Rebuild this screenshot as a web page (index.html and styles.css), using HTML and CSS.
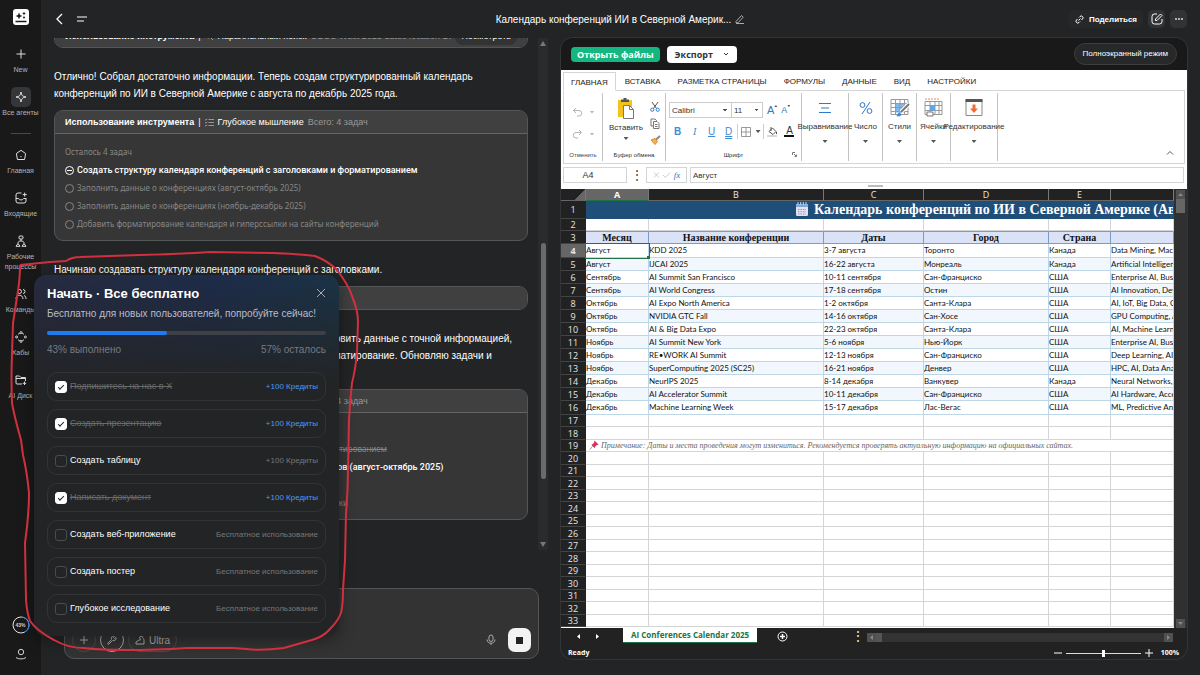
FILE: index.html
```html
<!DOCTYPE html>
<html lang="ru">
<head>
    <meta charset="UTF-8">
    <title>Календарь конференций ИИ</title>
    <link rel="stylesheet" href="styles.css">
</head>
<body>
<div class="app">
    <nav class="side">
        <a class="logo" href="#" aria-label="Home">
            <svg width="16" height="16" viewBox="0 0 16 16"><rect width="16" height="16" rx="3" fill="#fff"/><path d="M6 3.5l1 2.4 2.4 1-2.4 1-1 2.4-1-2.4-2.4-1 2.4-1z" fill="#191919"/><path d="M11 2.5l.6 1.4 1.4.6-1.4.6-.6 1.4-.6-1.4L9 4.5l1.4-.6z" fill="#191919"/><circle cx="11" cy="8.5" r="1" fill="#191919"/><path d="M2.5 12.5h11" stroke="#191919" stroke-width="1.5"/></svg>
        </a>
        <a class="item" href="#">
            <span class="ico"><svg width="12" height="12" viewBox="0 0 12 12"><path d="M6 1.5v9M1.5 6h9"/></svg></span>
            <span>New</span>
        </a>
        <a class="item on" href="#">
            <span class="ico"><svg width="12" height="12" viewBox="0 0 12 12"><path d="M6 1c.4 3.4 1.6 4.6 5 5-3.4.4-4.6 1.6-5 5-.4-3.4-1.6-4.6-5-5 3.4-.4 4.6-1.6 5-5z"/></svg></span>
            <span>Все агенты</span>
        </a>
        <i class="line"></i>
        <a class="item" href="#">
            <span class="ico"><svg width="12" height="12" viewBox="0 0 12 12"><path d="M6 1.3l4.6 3.2-1 6H2.4l-1-6z"/><path d="M6 7v1.2"/></svg></span>
            <span>Главная</span>
        </a>
        <a class="item" href="#">
            <span class="ico"><svg width="12" height="12" viewBox="0 0 12 12"><path d="M6.5 1H3a2 2 0 0 0-2 2v6a2 2 0 0 0 2 2h6a2 2 0 0 0 2-2V6M1 6.5h2.5c.6 2 4.4 2 5 0H11M9.7.6v4M7.7 2.6h4"/></svg></span>
            <span>Входящие</span>
        </a>
        <a class="item" href="#">
            <span class="ico"><svg width="12" height="12" viewBox="0 0 12 12"><rect x="4" y="1" width="4" height="3" rx="1"/><path d="M6 4v2M3 8.5C3 6.5 4 6 6 6s3 .5 3 2.5M3 8.5l-2 2.8h4zM9 8.5l-2 2.8h4z"/></svg></span>
            <span>Рабочие процессы</span>
        </a>
        <a class="item" href="#">
            <span class="ico"><svg width="12" height="12" viewBox="0 0 12 12"><circle cx="4.5" cy="3.5" r="2"/><path d="M1 11c0-5 7-5 7 0M8 1.5a2 2 0 0 1 0 4M9 7.5c1.5.5 2 1.8 2 3.5"/></svg></span>
            <span>Команды</span>
        </a>
        <a class="item" href="#">
            <span class="ico"><svg width="12" height="12" viewBox="0 0 12 12"><path d="M3 3.5A4 4 0 0 1 4.8 2.2M7.2 2.2A4 4 0 0 1 9 3.5M9 8.5a4 4 0 0 1-1.8 1.3M4.8 9.8A4 4 0 0 1 3 8.5"/><circle cx="6" cy="1.6" r="1"/><circle cx="6" cy="10.4" r="1"/><circle cx="1.6" cy="6" r="1"/><circle cx="10.4" cy="6" r="1"/></svg></span>
            <span>Хабы</span>
        </a>
        <a class="item" href="#">
            <span class="ico"><svg width="12" height="12" viewBox="0 0 12 12"><path d="M7 10H2a1 1 0 0 1-1-1V2h3.5L6 3.5h4.5V7M1 4.5h9.5M9.5 7.5v3.5M7.7 9.3h3.5"/></svg></span>
            <span>AI Диск</span>
        </a>
        <div class="bottom">
            <a class="ring" href="#">
                <svg width="18" height="18" viewBox="0 0 18 18" aria-hidden="true"><circle cx="9" cy="9" r="8" stroke="#e6e6e6"/><path d="M9 1a8 8 0 0 1 3.4 15.2" stroke="#1f7cf0"/></svg>
                <b>43%</b>
            </a>
            <a href="#" aria-label="Профиль"><svg width="12" height="12" viewBox="0 0 12 12"><circle cx="6" cy="4" r="2.7"/><path d="M1 9.6c3 1.8 7 1.8 10 0"/></svg></a>
        </div>
    </nav>

    <div class="main">
        <header class="top">
            <div class="top-left">
                <button aria-label="Назад"><svg width="10" height="12" viewBox="0 0 10 12"><path d="M8 1L3 6l5 5" stroke-width="1.3"/></svg></button>
                <button aria-label="Меню"><svg width="12" height="8" viewBox="0 0 12 8"><path d="M1 2h10M1 6h7"/></svg></button>
            </div>
            <h1>Календарь конференций ИИ в Северной Америк...
                <button aria-label="Переименовать"><svg width="10" height="10" viewBox="0 0 10 10"><path d="M1 7.5L6.5 1.5l1.7 1.7L3 8.8H1zM1 9.5h8"/></svg></button>
            </h1>
            <div class="top-right">
                <button class="share"><svg width="9" height="9" viewBox="0 0 9 9"><path d="M3.5 5.5l2-2M4 2.5l1-1a1.7 1.7 0 0 1 2.5 2.5l-1 1M5 6.5l-1 1A1.7 1.7 0 0 1 1.5 5l1-1"/></svg>Поделиться</button>
                <button class="sq" aria-label="Редактировать"><svg width="12" height="12" viewBox="0 0 12 12"><path d="M6 1H3.5A2.5 2.5 0 0 0 1 3.5v5A2.5 2.5 0 0 0 3.5 11h5A2.5 2.5 0 0 0 11 8.5V6M4.5 7.5V6L9.5 1 11 2.5l-5 5z"/></svg></button>
                <button class="sq" aria-label="Ещё"><svg width="10" height="4" viewBox="0 0 10 4"><circle cx="2" cy="2" r="1" fill="#ddd"/><circle cx="5" cy="2" r="1" fill="#ddd"/><circle cx="8" cy="2" r="1" fill="#ddd"/></svg></button>
            </div>
        </header>

        <div class="cols">
            <section class="chat">
                <div class="log-wrap">
                    <div class="log">
                        <div class="card first">
                            <div class="card-head"><b>Использование инструмента</b><i>|</i><svg width="9" height="9" viewBox="0 0 9 9"><circle cx="3.5" cy="3.5" r="2.5"/><path d="M5.5 5.5L8 8"/></svg><span>Параллельный поиск</span><em>ODSC West 2025 dates location Burlingame</em><button>Посмотреть</button></div>
                        </div>
                        <p>Отлично! Собрал достаточно информации. Теперь создам структурированный календарь конференций по ИИ в Северной Америке с августа по декабрь 2025 года.</p>
                        <div class="card">
                            <div class="card-head"><b>Использование инструмента</b><i>|</i><svg width="9" height="9" viewBox="0 0 9 9"><path d="M3.5 1.5H9M3.5 4.5H9M3.5 7.5H9M0 1.5l1 .7L2.3.8M0 4.5l1 .7 1.3-1.4M0 7.5l1 .7 1.3-1.4"/></svg><span>Глубокое мышление</span><em>Всего: 4 задач</em></div>
                            <div class="tasks">
                                <small>Осталось 4 задач</small>
                                <ul>
                                    <li class="now">Создать структуру календаря конференций с заголовками и форматированием</li>
                                    <li>Заполнить данные о конференциях (август-октябрь 2025)</li>
                                    <li>Заполнить данные о конференциях (ноябрь-декабрь 2025)</li>
                                    <li>Добавить форматирование календаря и гиперссылки на сайты конференций</li>
                                </ul>
                            </div>
                        </div>
                        <p>Начинаю создавать структуру календаря конференций с заголовками.</p>
                        <div class="card"><div class="card-head"><b>Использование инструмента</b></div></div>
                        <p>Отлично! Структура календаря создана. Теперь должен обновить данные с точной информацией, <br>которую я нашёл при поиске дат, и применить ко всему форматирование. Обновляю задачи и <br>продолжаю.</p>
                        <div class="card">
                            <div class="card-head"><b>Использование инструмента</b><i>|</i><svg width="9" height="9" viewBox="0 0 9 9"><path d="M3.5 1.5H9M3.5 4.5H9M3.5 7.5H9"/></svg><span>Глубокое мышление</span><em>Всего: 4 задач</em></div>
                            <div class="tasks">
                                <small>Осталось 3 задач</small>
                                <ul>
                                    <li class="old">Создать структуру календаря конференций с заголовками и форматированием</li>
                                    <li class="now">Заполнить точные данные о конференциях из всех источников (август-октябрь 2025)</li>
                                    <li>Заполнить данные (ноябрь-декабрь 2025)</li>
                                    <li>Добавить форматирование, гиперссылки на сайты и указать рубрики</li>
                                </ul>
                            </div>
                        </div>
                    </div>
                    <div class="vbar" aria-hidden="true"><span></span></div>
                </div>
                <form class="composer">
                    <button type="button" class="round" aria-label="Добавить"><svg width="10" height="10" viewBox="0 0 10 10"><path d="M5 1v8M1 5h8"/></svg></button>
                    <button type="button" class="round lit" aria-label="Инструменты"><svg width="10" height="10" viewBox="0 0 10 10"><path d="M1 8l3.5-3.5A2.5 2.5 0 0 1 7.5 1L6.3 2.5l1.2 1.2L9 2.5a2.5 2.5 0 0 1-3.5 3L2 9a.7.7 0 0 1-1-1z"/></svg></button>
                    <button type="button" class="round ultra"><svg width="10" height="10" viewBox="0 0 10 10"><path d="M1 9h8V5.5C9 3 7.5 3.5 7 1L4.5 2l1 3H4L1 7z"/></svg>Ultra</button>
                    <span class="grow"></span>
                    <button type="button" class="mic" aria-label="Голос"><svg width="10" height="12" viewBox="0 0 10 12"><rect x="3" y="1" width="4" height="6.5" rx="2"/><path d="M1 5.5c0 5 8 5 8 0M5 9.3V11"/></svg></button>
                    <button type="button" class="stop" aria-label="Стоп"></button>
                </form>
            </section>

            <section class="sheet">
                <div class="sheet-top">
                    <button class="open">Открыть файлы</button>
                    <button class="export">Экспорт<svg width="6" height="6" viewBox="0 0 6 6"><path d="M1 2l2 2 2-2"/></svg></button>
                    <button class="full">Полноэкранный режим</button>
                </div>
                <div class="ribbon">
                    <div class="tabs">
                        <a class="on" href="#">ГЛАВНАЯ</a><a href="#">ВСТАВКА</a><a href="#">РАЗМЕТКА СТРАНИЦЫ</a><a href="#">ФОРМУЛЫ</a><a href="#">ДАННЫЕ</a><a href="#">ВИД</a><a href="#">НАСТРОЙКИ</a>
                    </div>
                    <div class="groups">
                        <div class="group undo">
                            <div class="pair"><svg width="11" height="11" viewBox="0 0 11 11"><path d="M4 1L1.5 3.5 4 6M1.5 3.5H7a2.7 2.7 0 0 1 0 5.5H5"/></svg><i class="tri"></i></div>
                            <div class="pair"><svg width="11" height="11" viewBox="0 0 11 11"><path d="M7 1l2.5 2.5L7 6M9.5 3.5H4a2.7 2.7 0 0 0 0 5.5h2"/></svg><i class="tri"></i></div>
                            <small>Отменить</small>
                        </div>
                        <div class="group clip">
                            <button class="paste">
                                <svg width="18" height="21" viewBox="0 0 18 21"><path d="M1 2h14v17H1z" fill="#f5c21b"/><path d="M4 1.5h8V4H4zM6.5 0h3v2h-3z" fill="#555"/><path d="M6.5 7.5h6l4 4v9h-10z" fill="#fff" stroke="#777"/><path d="M12.5 7.5v4h4" fill="none" stroke="#777"/></svg>
                                Вставить
                                <i class="tri"></i>
                            </button>
                            <div class="stack">
                                <svg width="10" height="10" viewBox="0 0 10 10"><path d="M2 0l4.5 6.5M8 0L3.5 6.5" stroke="#555"/><circle cx="2.3" cy="7.7" r="1.6" stroke="#2f78c4"/><circle cx="7.7" cy="7.7" r="1.6" stroke="#2f78c4"/></svg>
                                <svg width="10" height="11" viewBox="0 0 10 11"><path d="M1 1h4l1.5 1.5V8H1z" stroke="#777"/><path d="M3.5 3.5h3.5L9 5.5v5H3.5zM5 6.5h2.5M5 8.5h2.5" stroke="#777" fill="#fff"/></svg>
                                <svg width="11" height="10" viewBox="0 0 11 10"><path d="M1 5l4-1.5 2.5 3L5 9.5z" fill="#f3b24a" stroke="#d98a2b"/><path d="M6 4.5L10 1" stroke="#888" stroke-width="2"/></svg>
                            </div>
                            <small>Буфер обмена</small>
                        </div>
                        <div class="group font">
                            <div class="selects">
                                <select class="face" aria-label="Шрифт"><option>Calibri</option></select>
                                <select class="size" aria-label="Размер"><option>11</option></select>
                                <b class="aa">A<i class="tri up"></i></b><b class="aa sm">A<i class="tri"></i></b>
                            </div>
                            <div class="marks">
                                <button><b>B</b></button><button><i class="it">I</i></button><button><u>U</u></button><button><u class="dbl">D</u></button>
                                <button class="cut"><svg width="10" height="10" viewBox="0 0 10 10"><path d="M.5.5h9v9h-9zM5 .5v9M.5 5h9" stroke="#999"/></svg><i class="tri"></i></button>
                                <button class="cut"><svg width="11" height="10" viewBox="0 0 11 10"><path d="M2 4.5L5.5 1 9 4.5 6 7.5zM4 0v4M9.5 5v2" stroke="#555"/><path d="M0 9h10" stroke="#d8d8d8" stroke-width="2"/></svg></button>
                                <button><span class="ink">A</span></button>
                            </div>
                            <small>Шрифт</small>
                            <svg class="launch" width="5" height="5" viewBox="0 0 5 5"><path d="M.5 3V.5H3M2 2l2 2M4.5 2.5v2h-2" stroke="#777"/></svg>
                        </div>
                        <button class="group big wide">
                            <svg width="20" height="20" viewBox="0 0 20 20"><path d="M4 5.5h12M6 10h8M4 14.5h12" stroke="#2f78c4" stroke-width="1.2"/></svg>
                            <span>Выравнивание</span><i class="tri"></i>
                        </button>
                        <button class="group big">
                            <svg width="20" height="20" viewBox="0 0 20 20"><circle cx="6.5" cy="7" r="2.4" stroke="#2f78c4"/><circle cx="13.5" cy="13" r="2.4" stroke="#2f78c4"/><path d="M14 4L6 16" stroke="#2f78c4"/></svg>
                            <span>Число</span><i class="tri"></i>
                        </button>
                        <button class="group big">
                            <svg width="20" height="20" viewBox="0 0 20 20"><path d="M5.5 5.5h9v9h-9z" fill="#7db8ee"/><path d="M1 1.5h17v15H1zM1 5.5h17M1 9.5h17M1 13.5h17M5.5 1.5v15M10 1.5v15M14.5 1.5v15" stroke="#999"/><path d="M19 6l-8 8" stroke="#fff" stroke-width="4"/><path d="M19 6l-8 8" stroke="#777" stroke-width="2"/><path d="M6 18c2 0 1-3 3.5-3.5l2 2C11 18.5 8 19 6 18z" fill="#2f8be6"/></svg>
                            <span>Стили</span><i class="tri"></i>
                        </button>
                        <button class="group big">
                            <svg width="20" height="20" viewBox="0 0 20 20"><path d="M1 1h15" stroke="#e0916a" stroke-dasharray="2 1"/><path d="M1 3.5h17v13H1zM1 7.5h17M1 12.5h17M6 3.5v13M11 3.5v13M15 3.5v13" stroke="#999"/><path d="M6 7.5h5v5H6z" fill="#5ba7ee"/><path d="M3 14h6v4H3z" fill="#fff" stroke="#777"/></svg>
                            <span>Ячейки</span><i class="tri"></i>
                        </button>
                        <button class="group big wide">
                            <svg width="20" height="20" viewBox="0 0 20 20"><path d="M2 2h16v15.5H2z" fill="#fff" stroke="#888"/><path d="M1.5 1h17v3h-17z" fill="#555"/><path d="M8.5 6.5h3v4H14l-4 4.5-4-4.5h2.5z" fill="#ee6c37"/></svg>
                            <span>Редактирование</span><i class="tri"></i>
                        </button>
                        <svg class="fold" width="8" height="6" viewBox="0 0 8 6"><path d="M1 4.5L4 1.5l3 3" stroke="#555"/></svg>
                    </div>
                </div>
                <div class="formula">
                    <input class="name" value="A4" aria-label="Ячейка">
                    <span class="dots">&#8942;</span>
                    <div class="fx"><svg width="18" height="8" viewBox="0 0 18 8"><path d="M1 1.5l5 5M6 1.5l-5 5M10 4l2.5 2.5L17 1.5" stroke="#ccc"/></svg><i>fx</i></div>
                    <input class="value" value="Август" aria-label="Формула">
                    <span class="grip"></span>
                </div>
                <div class="grid">
                    <div class="cells">
                        <table>
                            <colgroup><col class="c-n"><col class="c-a"><col class="c-b"><col class="c-c"><col class="c-d"><col class="c-e"><col></colgroup>
                            <thead><tr><th class="corner"></th><th class="sel">A</th><th>B</th><th>C</th><th>D</th><th>E</th><th></th></tr></thead>
                            <tbody id="rows">
                            <tr class="title"><th>1</th><td colspan="6"><svg width="14" height="14" viewBox="0 0 14 14"><rect x="1" y="2" width="12" height="12" rx="1.5" fill="#e4e2f2"/><path d="M1 2h12v3H1z" fill="#7fa6d8"/><path d="M3 0v3M5.7 0v3M8.3 0v3M11 0v3" stroke="#c9d9ee"/><path d="M3 7.5h8M3 9.7h8M3 12h8" stroke="#9a8fc0" stroke-dasharray="1.5 1"/></svg>Календарь конференций по ИИ в Северной Америке (Август - Декабрь 2025)</td></tr>
                            <tr class="gap"><th>2</th><td></td><td></td><td></td><td></td><td></td><td></td></tr>
                            <tr class="names"><th>3</th><td>Месяц</td><td>Название конференции</td><td>Даты</td><td>Город</td><td>Страна</td><td></td></tr>
                            </tbody>
                        </table>
                    </div>
                    <div class="vscroll" aria-hidden="true"><i></i><b></b><i class="down"></i></div>
                </div>
                <div class="books">
                    <i class="prev"></i><i class="next"></i>
                    <button class="book">AI Conferences Calendar 2025</button>
                    <button class="add" aria-label="Новый лист"><svg width="11" height="11" viewBox="0 0 11 11"><circle cx="5.5" cy="5.5" r="4.5"/><path d="M5.5 3v5M3 5.5h5" stroke-width="1.5"/></svg></button>
                    <span class="dots">&#8942;</span>
                    <div class="hscroll" aria-hidden="true"><i></i><b></b><span></span><i class="right"></i></div>
                </div>
                <div class="status">
                    <span>Ready</span>
                    <label class="zoom"><svg width="8" height="8" viewBox="0 0 8 8"><path d="M0 4h8"/></svg><input type="range" value="50" aria-label="Масштаб"><svg width="8" height="8" viewBox="0 0 8 8"><path d="M0 4h8M4 0v8"/></svg></label>
                    <span>100%</span>
                </div>
            </section>
        </div>
    </div>

    <aside class="popup">
        <button class="close" aria-label="Закрыть"><svg width="10" height="10" viewBox="0 0 10 10"><path d="M1 1l8 8M9 1L1 9"/></svg></button>
        <h2>Начать · Все бесплатно</h2>
        <p class="sub">Бесплатно для новых пользователей, попробуйте сейчас!</p>
        <div class="bar"><span style="width: 43%"></span></div>
        <div class="pct"><span>43% выполнено</span><span>57% осталось</span></div>
        <label class="row"><input type="checkbox" checked><span>Подпишитесь на нас в X</span><em>+100 Кредиты</em></label>
        <label class="row"><input type="checkbox" checked><span>Создать презентацию</span><em>+100 Кредиты</em></label>
        <label class="row"><input type="checkbox"><span>Создать таблицу</span><em>+100 Кредиты</em></label>
        <label class="row"><input type="checkbox" checked><span>Написать документ</span><em>+100 Кредиты</em></label>
        <label class="row"><input type="checkbox"><span>Создать веб-приложение</span><em>Бесплатное использование</em></label>
        <label class="row"><input type="checkbox"><span>Создать постер</span><em>Бесплатное использование</em></label>
        <label class="row"><input type="checkbox"><span>Глубокое исследование</span><em>Бесплатное использование</em></label>
    </aside>

    <svg class="pen" width="370" height="410" viewBox="0 250 370 410" aria-hidden="true">
        <path d="M20 265L50 262 66 261Q72 257 80 257L140 255Q180 254 210 252L273 253Q298 254 315 256 328 261 337 270 348 284 352 296 358 310 358 322L357 353Q355 372 352 383 350 400 349 420L348 470Q348 490 346 513L345 560 343 590Q343 605 341 613 338 621 330 629 323 637 312 640L284 648Q262 651 247 649L233 648 187 648Q120 652 83 648 68 648 54 640 37 631 30 621 27 613 26 600L25 543Q29 515 29 493 27 472 23 455L21 440Q14 415 12 403 11 380 12 353L13 323 17 297Q20 280 20 266"/>
    </svg>
</div>
<script>
    var data = [
        ["Август", "KDD 2025", "3-7 августа", "Торонто", "Канада", "Data Mining, Machine Learning"],
        ["Август", "IJCAI 2025", "16-22 августа", "Монреаль", "Канада", "Artificial Intelligence"],
        ["Сентябрь", "AI Summit San Francisco", "10-11 сентября", "Сан-Франциско", "США", "Enterprise AI, Business"],
        ["Сентябрь", "AI World Congress", "17-18 сентября", "Остин", "США", "AI Innovation, Development"],
        ["Октябрь", "AI Expo North America", "1-2 октября", "Санта-Клара", "США", "AI, IoT, Big Data, Cloud"],
        ["Октябрь", "NVIDIA GTC Fall", "14-16 октября", "Сан-Хосе", "США", "GPU Computing, AI"],
        ["Октябрь", "AI & Big Data Expo", "22-23 октября", "Санта-Клара", "США", "AI, Machine Learning"],
        ["Ноябрь", "AI Summit New York", "5-6 ноября", "Нью-Йорк", "США", "Enterprise AI, Business"],
        ["Ноябрь", "RE•WORK AI Summit", "12-13 ноября", "Сан-Франциско", "США", "Deep Learning, AI"],
        ["Ноябрь", "SuperComputing 2025 (SC25)", "16-21 ноября", "Денвер", "США", "HPC, AI, Data Analytics"],
        ["Декабрь", "NeurIPS 2025", "8-14 декабря", "Ванкувер", "Канада", "Neural Networks, ML"],
        ["Декабрь", "AI Accelerator Summit", "10-11 декабря", "Сан-Франциско", "США", "AI Hardware, Accelerators"],
        ["Декабрь", "Machine Learning Week", "15-17 декабря", "Лас-Вегас", "США", "ML, Predictive Analytics"]
    ];
    var rows = document.getElementById("rows");
    var pin = '<svg width="10" height="10" viewBox="0 0 10 10"><path d="M5.5.5l4 4-1 .5-1.5.5-1.5 2.5-3-3L5 3z" fill="#d8315b"/><path d="M3.5 6.5L.8 9.5" stroke="#999"/></svg>';

    for (var n = 4; n <= 33; n++) {
        var tr = document.createElement("tr");
        var item = data[n - 4];
        var html = "<th>" + n + "</th>";
        if (n == 19) {
            tr.className = "note";
            html += '<td colspan="6">' + pin + 'Примечание: Даты и места проведения могут измениться. Рекомендуется проверять актуальную информацию на официальных сайтах.</td>';
        } else {
            tr.className = item ? "event" : "";
            for (var c = 0; c < 6; c++) {
                html += "<td>" + (item ? item[c].replace("&", "&amp;") : "") + "</td>";
            }
        }
        tr.innerHTML = html;
        rows.appendChild(tr);
    }
    rows.children[3].className += " current";
</script>
</body>
</html>
```
FILE: styles.css
```css
*{
    margin: 0;
    padding: 0;
    box-sizing: border-box;
}
ul{
    list-style: none;
}
a{
    color: inherit;
    text-decoration: none;
}
button{
    border: 0;
    background: none;
    color: inherit;
    font: inherit;
    cursor: pointer;
}
svg{
    fill: none;
    stroke: currentColor;
    flex: none;
}
svg [fill]:not([stroke]){
    stroke: none;
}
body{
    background: #232425;
    color: #fff;
    font: 10px/17px "Liberation Sans", Arial, sans-serif;
    overflow: hidden;
}
.app{
    position: relative;
    display: flex;
    height: 100vh;
}

/* sidebar */
.side{
    flex: 0 0 41px;
    display: flex;
    flex-direction: column;
    align-items: center;
    gap: 12px;
    padding-top: 9px;
    background: #191919;
    color: #d0d0d0;
}
.logo{
    height: 16px;
    margin-bottom: 7px;
}
.item{
    width: 41px;
    display: flex;
    flex-direction: column;
    align-items: center;
    gap: 1px;
    font-size: 7px;
    line-height: 10px;
    text-align: center;
    color: #b4b4b4;
}
.ico{
    width: 20px;
    height: 20px;
    display: flex;
    align-items: center;
    justify-content: center;
    border-radius: 5px;
    color: #e0e0e0;
}
.on .ico{
    background: #353637;
}
.side .line{
    width: 20px;
    height: 1px;
    margin: 3px 0 -1px;
    background: #4a4a4a;
}
.bottom{
    margin: auto 0 15px;
    display: flex;
    flex-direction: column;
    align-items: center;
    gap: 14px;
}
.bottom a{
    display: flex;
}
.ring{
    position: relative;
}
.ring b{
    position: absolute;
    left: 0;
    right: 0;
    top: 0;
    font-size: 5px;
    line-height: 18px;
    text-align: center;
}

/* header */
.main{
    flex: 1;
    min-width: 0;
    display: flex;
    flex-direction: column;
    padding: 0 13px 16px 0;
}
.top{
    flex: 0 0 38px;
    display: grid;
    grid-template-columns: 1fr auto 1fr;
    align-items: center;
    padding-left: 13px;
}
.top button{
    display: flex;
    align-items: center;
    justify-content: center;
}
.top-left,
.top-right{
    display: flex;
    align-items: center;
    gap: 5px;
}
.top-left{
    gap: 12px;
}
.top-right{
    justify-content: flex-end;
}
h1{
    display: flex;
    align-items: center;
    gap: 4px;
    font-size: 10px;
    font-weight: normal;
}
h1 button{
    color: #aaa;
}
.share{
    height: 18px;
    padding: 0 6px;
    gap: 5px;
    border-radius: 5px;
    background: #27282a;
    font-size: 8px;
    font-weight: bold;
}
.sq{
    width: 17px;
    height: 18px;
    border-radius: 5px;
    background: #323334;
}
.cols{
    flex: 1;
    min-height: 0;
    display: grid;
    grid-template-columns: 520fr 626fr;
}

/* chat */
.chat{
    display: flex;
    flex-direction: column;
    min-width: 0;
    min-height: 0;
}
.log-wrap{
    flex: 1;
    min-height: 0;
    display: flex;
    gap: 10px;
    padding: 0 13px;
    margin-bottom: 38px;
}
.log{
    flex: 1;
    min-width: 0;
    overflow: hidden;
}
.log p{
    margin: 20px 0 8px;
}
.card{
    border: 1px solid #545556;
    border-radius: 9px;
    background: #363636;
    overflow: hidden;
}
.card.first{
    margin-top: -14px;
}
.card-head{
    height: 22px;
    display: flex;
    align-items: center;
    gap: 4px;
    padding: 0 10px;
    background: #404040;
    font-size: 9px;
    white-space: nowrap;
}
.card-head i{
    font-style: normal;
}
.card-head svg{
    color: #999;
}
.card-head em{
    flex: 1;
    min-width: 0;
    overflow: hidden;
    font-style: normal;
    color: #999;
}
.card-head button{
    padding: 0 6px;
    border-radius: 8px;
    background: #333;
}
.tasks{
    padding: 9px 10px 7px;
    border-top: 1px solid #636465;
    font: 8px/18px "Noto Sans", sans-serif;
    color: #868686;
}
.tasks small{
    display: block;
    font-size: 8px;
}
.tasks li{
    display: flex;
    align-items: center;
    gap: 3px;
    white-space: nowrap;
}
.tasks li::before{
    content: "";
    width: 7px;
    height: 7px;
    border: 1px solid #868686;
    border-radius: 50%;
}
.tasks .now{
    color: #fff;
    font-family: Roboto, sans-serif;
    font-size: 9px;
    font-weight: 500;
}
.tasks .now::before{
    border-color: #fff;
    background: linear-gradient(#fff, #fff) center / 5px 1px no-repeat;
}
.tasks .old{
    text-decoration: line-through;
}
.vbar{
    width: 10px;
    display: flex;
    flex-direction: column;
    align-items: center;
    background: #2a2b2c;
}
.vbar::before,
.vbar::after{
    content: "";
    margin: 3px 0;
    border: 3px solid transparent;
    border-top: 0;
    border-bottom: 5px solid #777;
}
.vbar::after{
    margin-top: auto;
    border-top: 5px solid #777;
    border-bottom: 0;
}
.vbar span{
    width: 5px;
    height: 46%;
    margin-top: 194px;
    border-radius: 3px;
    background: #6a6b6c;
}
.composer{
    height: 71px;
    margin: 0 22px 0 23px;
    padding: 0 7px 6px;
    display: flex;
    align-items: flex-end;
    gap: 4px;
    border: 1px solid #545556;
    border-radius: 10px;
    background: #333;
    color: #aaa;
}
.composer button{
    display: flex;
    align-items: center;
    justify-content: center;
    gap: 4px;
    height: 24px;
}
.composer .round{
    width: 24px;
    border: 1px solid #4a4b4c;
    border-radius: 12px;
}
.composer .lit{
    border-color: #aaa;
}
.composer .ultra{
    width: 49px;
}
.grow{
    flex: 1;
}
.mic{
    width: 26px;
}
.composer .stop{
    width: 23px;
    border-radius: 7px;
    background: #f2f2f2;
}
.stop::before{
    content: "";
    width: 7px;
    height: 7px;
    background: #222;
}

/* spreadsheet */
.sheet{
    display: flex;
    flex-direction: column;
    min-width: 0;
    min-height: 0;
    border-radius: 12px;
    background: #222;
    overflow: hidden;
    box-shadow: 0 0 0 1px #333435;
}
.sheet-top{
    flex: 0 0 32px;
    display: flex;
    align-items: center;
    gap: 7px;
    padding: 0 10px;
    background: #191919;
}
.open,
.export{
    height: 15px;
    padding: 0 6px;
    border-radius: 4px;
    background: #14b781;
    font: bold 9px/15px "Open Sans", sans-serif;
}
.export{
    height: 17px;
    display: flex;
    align-items: center;
    gap: 10px;
    padding: 0 8px;
    background: #fff;
    color: #333;
}
.full{
    height: 22px;
    margin-left: auto;
    padding: 0 8px;
    border: 1px solid #3c3d3e;
    border-radius: 11px;
    background: #272829;
    font-size: 8px;
    line-height: 20px;
}
.ribbon{
    padding: 2px 2px 0;
    background: #fff;
    color: #333;
}
.tabs{
    height: 19px;
    display: flex;
    border-bottom: 1px solid #d5d5d5;
    font-size: 8px;
    line-height: 19px;
    color: #222;
}
.tabs a{
    padding: 0 8px 0 9px;
}
.tabs .on{
    height: 19px;
    border: 1px solid #d5d5d5;
    border-bottom-color: #fff;
    padding: 0 7px;
}
.groups{
    height: 73px;
    display: flex;
    padding: 2px 0;
    border: 1px solid #d5d5d5;
    border-top: 0;
}
.group{
    position: relative;
    border-right: 1px solid #c3c3c3;
    font-size: 8px;
    line-height: 10px;
}
.group small{
    position: absolute;
    left: 0;
    right: 0;
    bottom: 1px;
    font-size: 6px;
    text-align: center;
}
.tri{
    width: 5px;
    height: 3px;
    background: #555;
    clip-path: polygon(0 0, 100% 0, 50% 100%);
}
.undo{
    width: 39px;
    padding-top: 8px;
    color: #b5b5b5;
}
.undo small{
    color: #444;
}
.pair{
    display: flex;
    align-items: center;
    justify-content: center;
    gap: 7px;
    height: 22px;
}
.pair .tri{
    background: #b5b5b5;
}
.clip{
    width: 63px;
    display: flex;
    gap: 7px;
    padding: 5px 0 0 6px;
}
.paste{
    width: 34px;
    display: flex;
    flex-direction: column;
    align-items: center;
    gap: 4px;
    height: 44px;
}
.stack{
    display: flex;
    flex-direction: column;
    gap: 6px;
    padding-top: 4px;
}
.font{
    width: 136px;
    padding: 9px 3px 0;
}
.selects{
    display: flex;
    align-items: flex-start;
}
select{
    height: 16px;
    border: 1px solid #ccc;
    border-radius: 0;
    padding: 0 2px;
    appearance: none;
    background: conic-gradient(from -45deg at 50% 100%, #555 90deg, transparent 0) right 4px center / 4px 2px no-repeat #fff;
    color: #333;
    font: 8px "Liberation Sans", Arial, sans-serif;
}
.face{
    width: 63px;
}
.size{
    width: 32px;
    margin-left: -1px;
}
.aa{
    display: flex;
    margin: 3px 0 0 4px;
    font-size: 11px;
    font-weight: normal;
    color: #2f78c4;
}
.aa .tri{
    width: 3px;
    height: 2px;
}
.aa .up{
    clip-path: polygon(50% 0, 100% 100%, 0 100%);
}
.aa.sm{
    font-size: 9px;
}
.marks{
    display: flex;
    align-items: center;
    margin-top: 6px;
    color: #3f8bd0;
    font-size: 10px;
}
.marks button{
    width: 18px;
    height: 15px;
    display: flex;
    align-items: center;
    justify-content: center;
    gap: 5px;
}
.marks .it{
    font-family: "Liberation Serif", serif;
}
.marks .cut{
    width: 27px;
    border-left: 1px solid #ccc;
}
.marks .cut + .cut{
    width: 19px;
}
.marks .dbl{
    text-decoration-style: double;
}
.ink{
    width: 10px;
    line-height: 9px;
    border-bottom: 2px solid #111;
    color: #333;
}
.launch{
    position: absolute;
    right: 4px;
    bottom: 4px;
}
.big{
    width: 34px;
    display: flex;
    flex-direction: column;
    align-items: center;
    padding-top: 5px;
    white-space: nowrap;
}
.big span{
    margin: 4px 0 8px;
}
.wide{
    width: 47px;
}
.fold{
    margin: auto 10px 5px auto;
}
.formula{
    position: relative;
    height: 25px;
    display: flex;
    padding: 3px 3px 6px 2px;
    background: #fff;
    color: #333;
}
.formula input,
.fx{
    height: 16px;
    border: 1px solid #d5d5d5;
    background: #fff;
    color: #333;
    font: 8px "Liberation Sans", Arial, sans-serif;
}
.formula .name{
    width: 64px;
    padding-right: 14px;
    font-size: 9px;
    text-align: center;
}
.dots{
    width: 19px;
    font-size: 12px;
    line-height: 16px;
    text-align: center;
}
.fx{
    width: 41px;
    margin-right: 3px;
    display: flex;
    align-items: center;
    justify-content: center;
    gap: 3px;
}
.fx i{
    font: italic 9px/14px "Liberation Serif", serif;
    color: #2f78c4;
}
.formula .value{
    flex: 1;
    min-width: 0;
    padding-left: 2px;
}
.grip{
    position: absolute;
    left: 49%;
    bottom: 2px;
    width: 15px;
    height: 2px;
    background: #bbb;
}
.grid{
    flex: 1;
    min-height: 0;
    display: flex;
}
.cells{
    flex: 1;
    min-width: 0;
    overflow: hidden;
    background: #fff;
}
table{
    width: 100%;
    table-layout: fixed;
    border-collapse: separate;
    border-spacing: 0;
    color: #111;
    font: 8px/12px Lato, "Open Sans", sans-serif;
}
.c-n{
    width: 25px;
}
.c-a{
    width: 63px;
}
.c-b{
    width: 175px;
}
.c-c{
    width: 100px;
}
.c-d{
    width: 125px;
}
.c-e{
    width: 62px;
}
th{
    border-right: 1px solid #222;
    border-bottom: 1px solid #444;
    background: #222;
    color: #e5e5e5;
    font: 9px/11px "Open Sans", sans-serif;
}
thead th{
    height: 12px;
    border-right-color: #777;
    border-bottom-color: #666;
}
thead .sel{
    background: #666;
    border-bottom-color: #217346;
    color: #fff;
    font-weight: bold;
}
.corner{
    background: linear-gradient(135deg, #222 70%, #666 70%);
}
td{
    border-right: 1px solid #d5d5d5;
    border-bottom: 1px solid #d5d5d5;
    overflow: hidden;
    white-space: nowrap;
}
tbody tr{
    height: 12px;
}
tbody tr:nth-child(even){
    height: 13px;
}
tbody th,
tbody td{
    line-height: 11px;
}
tbody .title{
    height: 18px;
}
.title td{
    padding-left: 209px;
    border-color: #1f4e79;
    background: #1f4e79;
    color: #fff;
    font: bold 14px/16px "Liberation Serif", serif;
}
.title svg{
    margin-right: 5px;
    vertical-align: top;
}
tbody tr.gap{
    height: 12px;
}
tbody .names{
    height: 13px;
}
.names td{
    border-color: #7f9bbd;
    border-top: 1px solid #7f9bbd;
    background: #d9e2f7;
    font: bold 10px/11px "Liberation Serif", serif;
    text-align: center;
}
tbody tr.event{
    height: 13px;
}
.event td{
    border-color: #bdd7e7;
}
.event:nth-child(odd) td{
    background: #f1f7fc;
}
tbody tr.current,
tbody tr.event:nth-child(16){
    height: 14px;
}
.current th{
    background: #666;
    font-weight: bold;
}
tbody .current td:nth-child(2){
    position: relative;
    outline: 1px solid #217346;
    overflow: visible;
}
.current td:nth-child(2)::after{
    content: "";
    position: absolute;
    right: -2px;
    bottom: -2px;
    width: 3px;
    height: 3px;
    background: #217346;
}
.note td{
    padding-left: 3px;
    color: #666;
    font: italic 8px/11px "Liberation Serif", serif;
}
.note svg{
    margin-right: 2px;
    vertical-align: top;
}
.vscroll{
    width: 13px;
    display: flex;
    flex-direction: column;
    align-items: center;
    padding-top: 1px;
    background: #303030;
}
.vscroll i,
.hscroll i{
    width: 9px;
    height: 9px;
    display: flex;
    align-items: center;
    justify-content: center;
    background: #505050;
}
.vscroll i::before,
.hscroll i::before{
    content: "";
    width: 5px;
    height: 3px;
    background: #888;
    clip-path: polygon(50% 0, 100% 100%, 0 100%);
}
.vscroll b{
    width: 9px;
    height: 14px;
    margin-bottom: auto;
    background: #666;
}
.vscroll .down::before{
    clip-path: polygon(0 0, 100% 0, 50% 100%);
}
.books{
    flex: 0 0 19px;
    display: flex;
    align-items: flex-start;
    padding-right: 14px;
}
.prev,
.next{
    width: 3px;
    height: 5px;
    margin: 6px 0 0 16px;
    background: #fff;
    clip-path: polygon(0 50%, 100% 0, 100% 100%);
}
.next{
    margin-right: 24px;
    clip-path: polygon(0 0, 100% 50%, 0 100%);
}
.book{
    padding: 0 8px;
    border-bottom: 1px solid #217346;
    background: #fff;
    color: #217346;
    font: bold 8px/14px "Open Sans", sans-serif;
}
.add{
    height: 11px;
    margin: 3px auto 0 20px;
    display: flex;
}
.hscroll{
    flex: 0 0 50%;
    display: flex;
    align-items: center;
    margin-top: 5px;
    background: #333;
}
.hscroll i::before{
    width: 3px;
    height: 5px;
    clip-path: polygon(0 50%, 100% 0, 100% 100%);
}
.hscroll .right::before{
    clip-path: polygon(0 0, 100% 50%, 0 100%);
}
.hscroll b{
    width: 6px;
    height: 9px;
    background: #555;
}
.hscroll span{
    flex: 1;
}
.status{
    flex: 0 0 12px;
    display: flex;
    align-items: center;
    gap: 8px;
    padding: 0 8px 0 7px;
    font: bold 7px/12px "Open Sans", sans-serif;
}
.zoom{
    margin-left: auto;
    display: flex;
    align-items: center;
    gap: 4px;
}
.zoom input{
    width: 75px;
    height: 7px;
    appearance: none;
    background: linear-gradient(#ddd, #ddd) center / 100% 1px no-repeat;
}
.zoom input::-webkit-slider-thumb{
    appearance: none;
    width: 3px;
    height: 7px;
    background: #fff;
}

/* onboarding popup */
.popup{
    position: absolute;
    left: 34px;
    bottom: 39px;
    width: 305px;
    padding: 10px 13px 13px;
    border-radius: 12px;
    background: linear-gradient(rgba(35, 36, 37, 0), #232425 110px), linear-gradient(to right, #262b40, #1d2c4a 60%, #1a3346);
    box-shadow: 0 4px 16px rgba(0, 0, 0, .4);
}
h2{
    font-size: 13px;
    line-height: 18px;
}
.close{
    position: absolute;
    right: 13px;
    top: 13px;
    display: flex;
    color: #aaa;
}
.sub{
    margin: 2px 0 9px;
    color: #bbbcc8;
}
.bar{
    height: 4px;
    border-radius: 2px;
    background: #3d4045;
}
.bar span{
    display: block;
    height: 4px;
    border-radius: 2px;
    background: #1f7cf0;
}
.pct{
    display: flex;
    justify-content: space-between;
    margin: 6px 0 14px;
    color: #777a82;
}
.row{
    height: 29px;
    display: flex;
    align-items: center;
    gap: 3px;
    padding: 0 7px;
    border: 1px solid #333435;
    border-radius: 10px;
    font-size: 9px;
}
.row + .row{
    margin-top: 8px;
}
.row input{
    width: 12px;
    height: 12px;
    appearance: none;
    border: 1px solid #4a4b4c;
    border-radius: 3px;
}
.row input:checked{
    border-color: #fff;
    background: #fff;
}
.row input:checked::before{
    content: "";
    display: block;
    width: 5px;
    height: 2px;
    margin: 3px 2px;
    border: solid #222;
    border-width: 0 0 1px 1px;
    transform: rotate(-45deg);
}
.row em{
    margin-left: auto;
    font-style: normal;
    font-size: 8px;
    color: #777;
}
.row input:checked ~ span{
    color: #6a6b6c;
    text-decoration: line-through;
}
.row input:checked ~ em{
    color: #4c9bf0;
}
.pen{
    position: absolute;
    left: 0;
    top: 250px;
    stroke: #d0303f;
    stroke-width: 2;
    pointer-events: none;
}
```
